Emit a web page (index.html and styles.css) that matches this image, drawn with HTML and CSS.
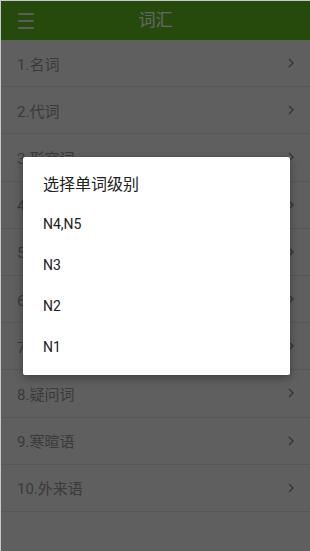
FILE: index.html
```html
<!DOCTYPE html>
<html lang="zh">
<head>
<meta charset="utf-8">
<link rel="stylesheet" href="styles.css">
</head>
<body>
<div class="screen">
  <header class="appbar">
    <span class="menu"><i></i><i></i><i></i></span>
    <h1 class="title">词汇</h1>
  </header>
  <ul class="list">
    <li class="row"><span>1.名词</span><svg class="chev" viewBox="0 0 6 10"><path d="M1 1l4 4-4 4" /></svg></li>
    <li class="row"><span>2.代词</span><svg class="chev" viewBox="0 0 6 10"><path d="M1 1l4 4-4 4" /></svg></li>
    <li class="row"><span>3.形容词</span><svg class="chev" viewBox="0 0 6 10"><path d="M1 1l4 4-4 4" /></svg></li>
    <li class="row"><span>4.形容动词</span><svg class="chev" viewBox="0 0 6 10"><path d="M1 1l4 4-4 4" /></svg></li>
    <li class="row"><span>5.动词</span><svg class="chev" viewBox="0 0 6 10"><path d="M1 1l4 4-4 4" /></svg></li>
    <li class="row"><span>6.副词</span><svg class="chev" viewBox="0 0 6 10"><path d="M1 1l4 4-4 4" /></svg></li>
    <li class="row"><span>7.连体词</span><svg class="chev" viewBox="0 0 6 10"><path d="M1 1l4 4-4 4" /></svg></li>
    <li class="row"><span>8.疑问词</span><svg class="chev" viewBox="0 0 6 10"><path d="M1 1l4 4-4 4" /></svg></li>
    <li class="row"><span>9.寒暄语</span><svg class="chev" viewBox="0 0 6 10"><path d="M1 1l4 4-4 4" /></svg></li>
    <li class="row"><span>10.外来语</span><svg class="chev" viewBox="0 0 6 10"><path d="M1 1l4 4-4 4" /></svg></li>
  </ul>
  <div class="overlay">
    <div class="dialog">
      <div class="dlg-title">选择单词级别</div>
      <div class="opt">N4,N5</div>
      <div class="opt">N3</div>
      <div class="opt">N2</div>
      <div class="opt">N1</div>
    </div>
  </div>
</div>
</body>
</html>
```
FILE: styles.css
```css
html, body {
  margin: 0;
  padding: 0;
}
body {
  width: 310px;
  height: 551px;
  overflow: hidden;
  font-family: Roboto, "Noto Sans CJK SC", sans-serif;
}
.screen {
  position: relative;
  width: 310px;
  height: 551px;
  background: #eeeeee;
  overflow: hidden;
  box-sizing: border-box;
  border-left: 1px solid #c8c8c8;
  border-top: 1px solid #c8c8c8;
}
.appbar {
  height: 39px;
  background: #5fb91e;
  display: flex;
  align-items: center;
  justify-content: center;
  position: relative;
}
.menu {
  position: absolute;
  left: 17px;
  top: 12px;
  width: 16px;
  display: flex;
  flex-direction: column;
  gap: 5px;
}
.menu i {
  display: block;
  height: 2px;
  background: #e6e6e6;
  border-radius: 1px;
}
.title {
  margin: 0;
  font-size: 17px;
  font-weight: normal;
  color: #ffffff;
  line-height: 39px;
}
.list {
  list-style: none;
  margin: 0;
  padding: 0;
}
.row {
  height: 47.2px;
  box-sizing: border-box;
  border-bottom: 1px solid #d9d9d9;
  display: flex;
  align-items: center;
  justify-content: space-between;
  padding: 0 16px 0 16px;
  font-size: 15px;
  color: #929292;
}
.chev {
  width: 6px;
  height: 10px;
  fill: none;
  stroke: #808080;
  stroke-width: 1.3;
}
.overlay {
  position: absolute;
  inset: 0;
  background: rgba(0, 0, 0, 0.6);
}
.dialog {
  position: absolute;
  left: 22px;
  top: 156px;
  width: 267px;
  background: #ffffff;
  border-radius: 2px;
  box-shadow: 0 3px 10px rgba(0, 0, 0, 0.35);
  padding: 0 0 7px;
}
.dlg-title {
  padding: 18px 20px 9px 20px;
  font-size: 16px;
  line-height: 20px;
  color: #212121;
}
.opt {
  height: 41px;
  line-height: 41px;
  padding: 0 20px;
  font-size: 14px;
  color: #212121;
}
```
